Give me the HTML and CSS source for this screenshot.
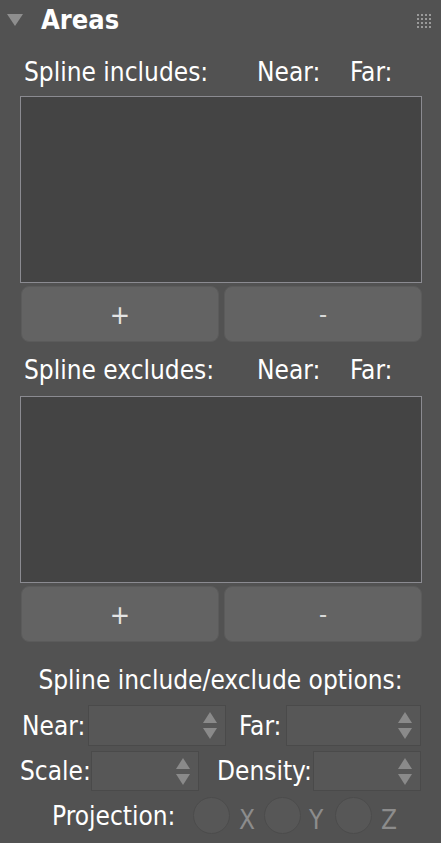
FILE: index.html
```html
<!DOCTYPE html>
<html>
<head>
<meta charset="utf-8">
<link rel="stylesheet" href="styles.css">
</head>
<body>
<div class="panel">
  <div class="header">
    <svg class="caret" width="16" height="12" viewBox="0 0 16 12"><polygon points="0,0 16,0 8,12" fill="#8e8e8e"/></svg>
    <span class="title">Areas</span>
    <div class="grip">
      <i></i><i></i><i></i><i></i>
      <i></i><i></i><i></i><i></i>
      <i></i><i></i><i></i><i></i>
      <i></i><i></i><i></i><i></i>
    </div>
  </div>

  <div class="list-head first">
    <span class="lh-name">Spline includes:</span>
    <span class="lh-near">Near:</span>
    <span class="lh-far">Far:</span>
  </div>
  <div class="listbox first"></div>
  <div class="btn-row">
    <div class="btn">+</div>
    <div class="btn minus">-</div>
  </div>

  <div class="list-head second">
    <span class="lh-name">Spline excludes:</span>
    <span class="lh-near">Near:</span>
    <span class="lh-far">Far:</span>
  </div>
  <div class="listbox second"></div>
  <div class="btn-row">
    <div class="btn">+</div>
    <div class="btn minus">-</div>
  </div>

  <div class="options-title">Spline include/exclude options:</div>

  <div class="spin-row row-a">
    <span class="lbl l-near">Near:</span>
    <div class="spin s-near"><span class="up"></span><span class="down"></span></div>
    <span class="lbl l-far">Far:</span>
    <div class="spin s-far"><span class="up"></span><span class="down"></span></div>
  </div>
  <div class="spin-row row-b">
    <span class="lbl l-scale">Scale:</span>
    <div class="spin s-scale"><span class="up"></span><span class="down"></span></div>
    <span class="lbl l-density">Density:</span>
    <div class="spin s-density"><span class="up"></span><span class="down"></span></div>
  </div>

  <div class="proj-row">
    <span class="proj-label">Projection:</span>
    <span class="radio"></span><span class="axis ax-x">X</span>
    <span class="radio"></span><span class="axis ax-y">Y</span>
    <span class="radio"></span><span class="axis ax-z">Z</span>
  </div>
</div>
</body>
</html>
```

FILE: styles.css
```css
html, body {
  margin: 0;
  padding: 0;
  background: #525252;
}
body {
  width: 441px;
  height: 843px;
  overflow: hidden;
  font-family: "DejaVu Sans Condensed", "DejaVu Sans", Verdana, sans-serif;
  font-stretch: condensed;
  color: #ffffff;
}
.panel {
  display: flex;
  flex-direction: column;
}
.header {
  display: flex;
  align-items: flex-start;
  height: 42px;
}
.caret {
  margin: 14px 0 0 7px;
  flex: none;
}
.title {
  font-weight: bold;
  font-size: 27px;
  line-height: 30px;
  margin: 5px 0 0 18px;
}
.grip {
  margin: 14px 0 0 auto;
  margin-right: 10px;
  display: grid;
  grid-template-columns: repeat(4, 2px);
  grid-auto-rows: 2px;
  gap: 2px;
}
.grip i {
  display: block;
  width: 2px;
  height: 2px;
  background: #9a9a9a;
}

.list-head {
  display: flex;
  font-size: 26px;
  line-height: 28px;
  height: 28px;
  white-space: nowrap;
}
.list-head.first { margin-top: 16px; }
.list-head.second { margin-top: 14px; }
.lh-name { margin-left: 24px; width: 233px; }
.lh-near { width: 93px; }

.listbox {
  margin: 10px 0 0 20px;
  width: 400px;
  height: 185px;
  border: 1px solid #8b8b91;
  background: #444444;
}
.listbox.second { margin-top: 12px; }
.btn-row {
  display: flex;
  gap: 5px;
  margin: 3px 0 0 21px;
}
.btn {
  width: 196px;
  height: 54px;
  border: 1px solid #5b5b5b;
  border-radius: 8px;
  background: #636363;
  color: #e4e4e4;
  font-size: 27px;
  display: flex;
  align-items: center;
  justify-content: center;
}
.btn.minus { color: #d8d8d8; font-size: 25px; }

.options-title {
  text-align: center;
  font-size: 26px;
  line-height: 28px;
  margin-top: 24px;
}

.spin-row {
  display: flex;
  align-items: center;
  font-size: 26px;
  white-space: nowrap;
}
.row-a { margin-top: 11px; padding-left: 22px; }
.row-b { margin-top: 5px; padding-left: 20px; }
.lbl { line-height: 28px; }
.l-near { width: 66px; }
.l-far { width: 47px; margin-left: 13px; }
.l-scale { width: 71px; }
.l-density { width: 96px; margin-left: 18px; }

.spin {
  position: relative;
  height: 39px;
  border: 1px solid #4a4a4a;
  background: #575757;
  box-sizing: content-box;
}
.s-near { width: 136px; }
.s-far { width: 133px; }
.s-scale { width: 106px; height: 38px; }
.s-density { width: 106px; height: 38px; }
.spin .up, .spin .down {
  position: absolute;
  right: 8px;
  width: 0;
  height: 0;
  border-left: 7px solid transparent;
  border-right: 7px solid transparent;
}
.spin .up {
  top: 6px;
  border-bottom: 11px solid #8a8a8a;
}
.spin .down {
  top: 22px;
  border-top: 11px solid #8a8a8a;
}

.proj-row {
  display: flex;
  align-items: center;
  margin-top: 6px;
  font-size: 26px;
  white-space: nowrap;
}
.proj-label {
  margin-left: 52px;
  width: 141px;
  line-height: 28px;
}
.radio {
  width: 35px;
  height: 35px;
  border-radius: 50%;
  border: 1px solid #4c4c4c;
  background: #575757;
  flex: none;
}
.axis {
  color: #8c8c8c;
  line-height: 28px;
  margin-top: 8px;
}
.ax-x { margin-left: 9px; width: 25px; }
.ax-y { margin-left: 8px; width: 26px; }
.ax-z { margin-left: 9px; }
```
